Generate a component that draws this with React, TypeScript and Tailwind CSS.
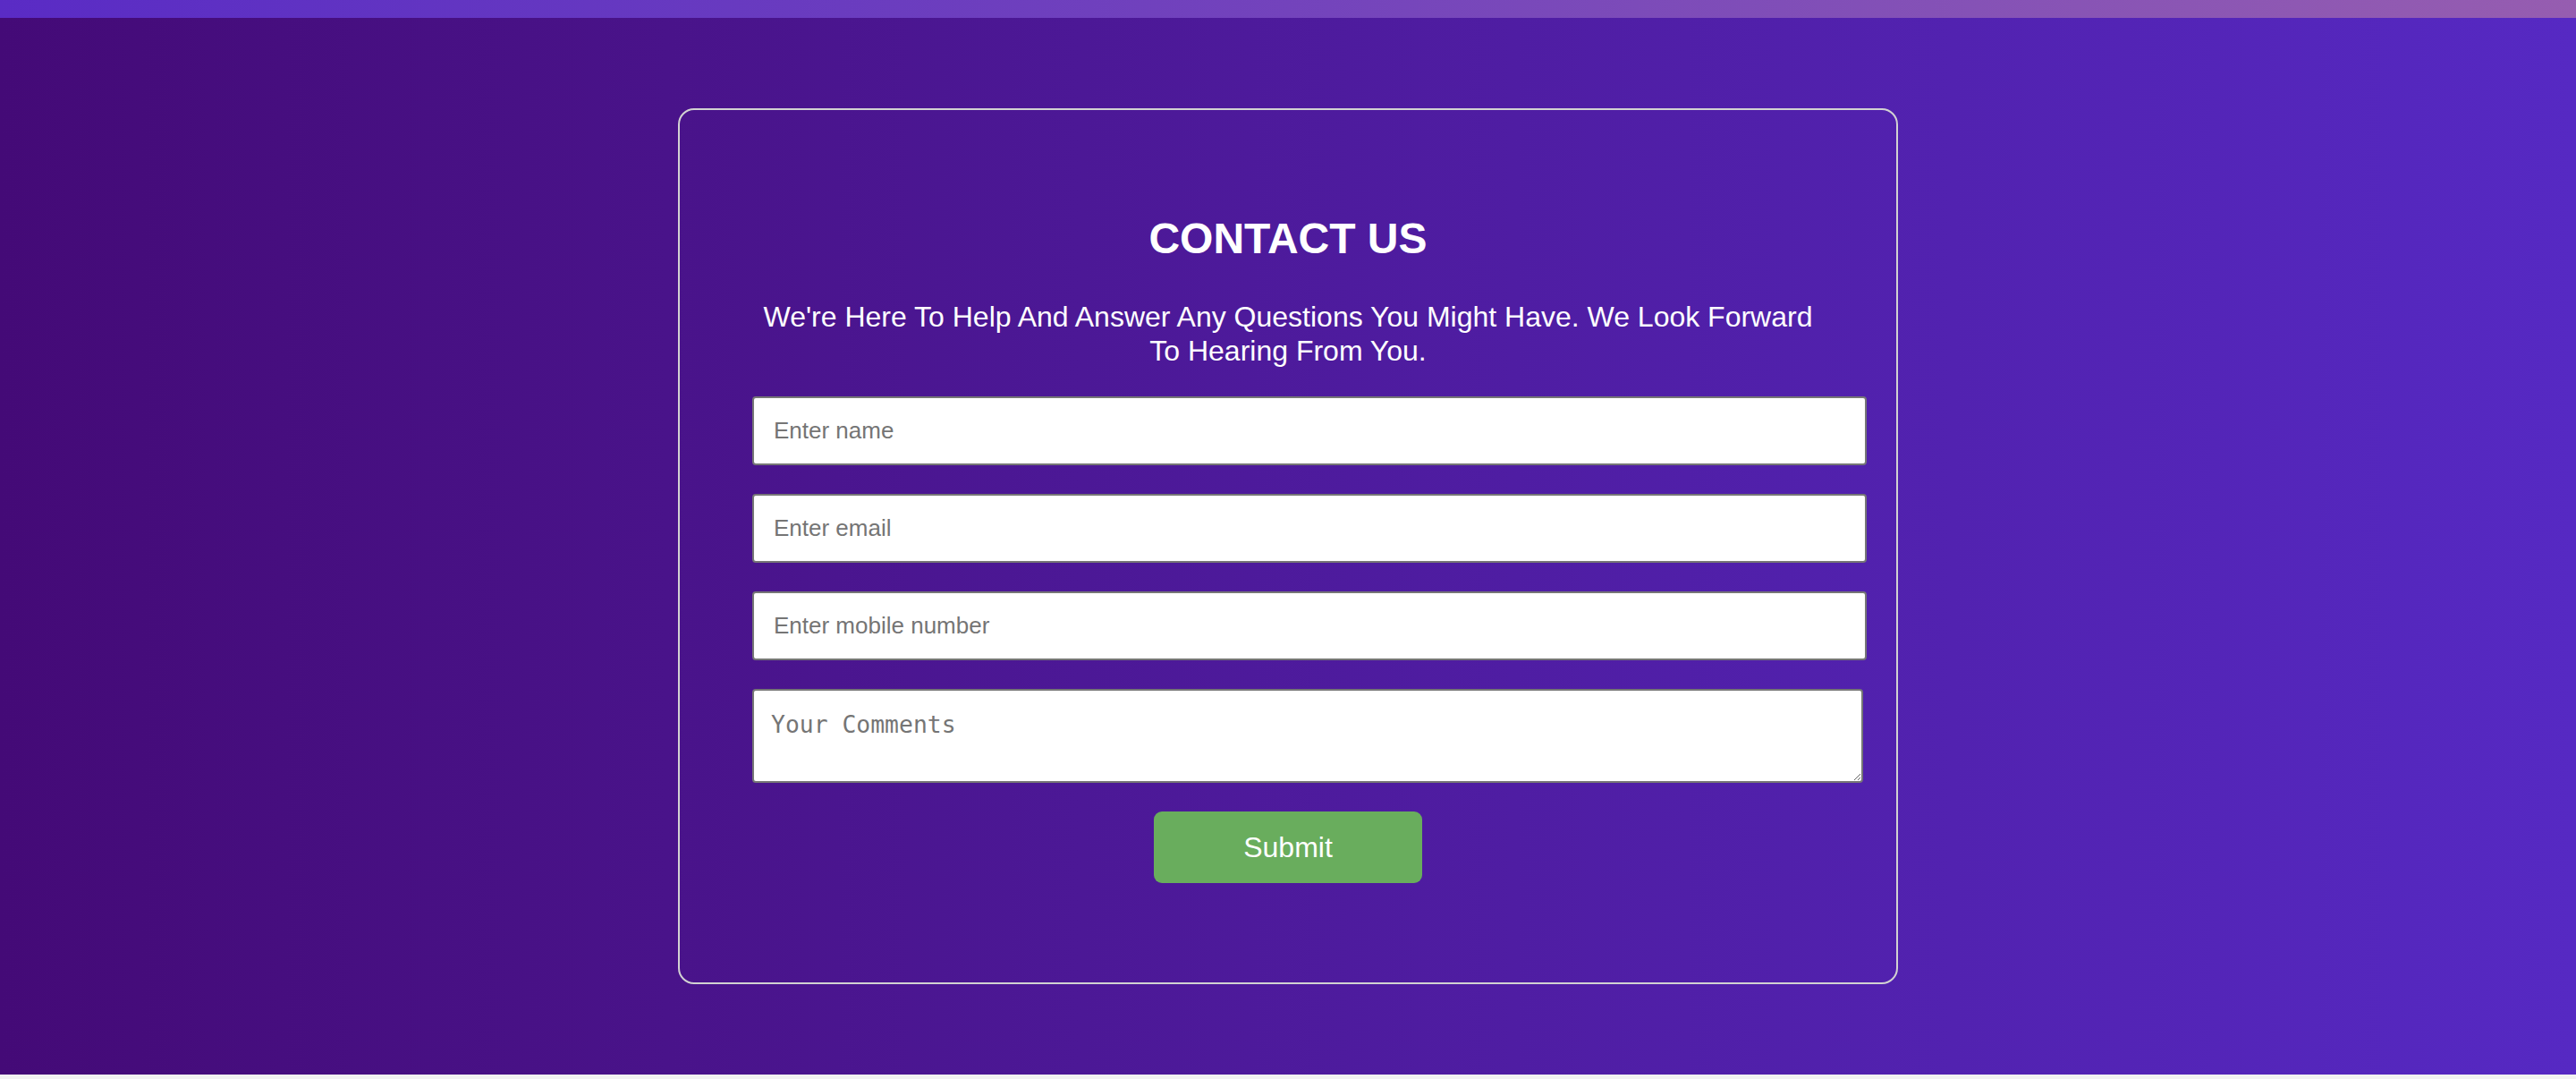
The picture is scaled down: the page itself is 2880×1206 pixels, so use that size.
export default function App() {
  return (
    <div className="bg-[#f2f2f2] pb-[5px] font-['Liberation_Sans',Arial,sans-serif]">
      <div className="h-[20px] bg-linear-to-r from-[#5a2bc5] via-[#7343bc] to-[#965db0]" />

      <main className="bg-linear-to-r from-[#440a77] to-[#5629c3] py-[101px]">
        <div className="mx-auto w-[1364px] rounded-[18px] border-2 border-[#d2d2d2] pt-[117px] pb-[111px]">
          <h1 className="text-center text-[48px] leading-[54px] font-bold text-white">CONTACT US</h1>
          <p className="mx-auto mt-[41px] max-w-[1195px] text-center text-[32px] leading-[38px] text-white">
            We're Here To Help And Answer Any Questions You Might Have. We Look Forward To Hearing From You.
          </p>

          <form className="mt-[32px] flex flex-col gap-[32px] pl-[81px] pr-[33px]">
            <input
              type="text"
              placeholder="Enter name"
              className="block h-[77px] w-full rounded-[4px] border-2 border-[#767676] bg-white pl-[22px] text-[26px] text-black placeholder:text-[#757575]"
            />
            <input
              type="email"
              placeholder="Enter email"
              className="block h-[77px] w-full rounded-[4px] border-2 border-[#767676] bg-white pl-[22px] text-[26px] text-black placeholder:text-[#757575]"
            />
            <input
              type="tel"
              placeholder="Enter mobile number"
              className="block h-[77px] w-full rounded-[4px] border-2 border-[#767676] bg-white pl-[22px] text-[26px] text-black placeholder:text-[#757575]"
            />
            <textarea
              placeholder="Your Comments"
              className="block h-[105px] w-[calc(100%-4px)] rounded-[4px] border-2 border-[#767676] bg-white pt-[18px] pl-[19px] font-['DejaVu_Sans_Mono',monospace] text-[26.4px] text-black placeholder:text-[#757575]"
            />
            <button
              type="button"
              className="h-[80px] w-[300px] rounded-[9px] bg-[#69ad5d] text-[32px] text-white"
              style={{ marginLeft: 'calc(50% - 150px - 24px)' }}
            >
              Submit
            </button>
          </form>
        </div>
      </main>
    </div>
  )
}
